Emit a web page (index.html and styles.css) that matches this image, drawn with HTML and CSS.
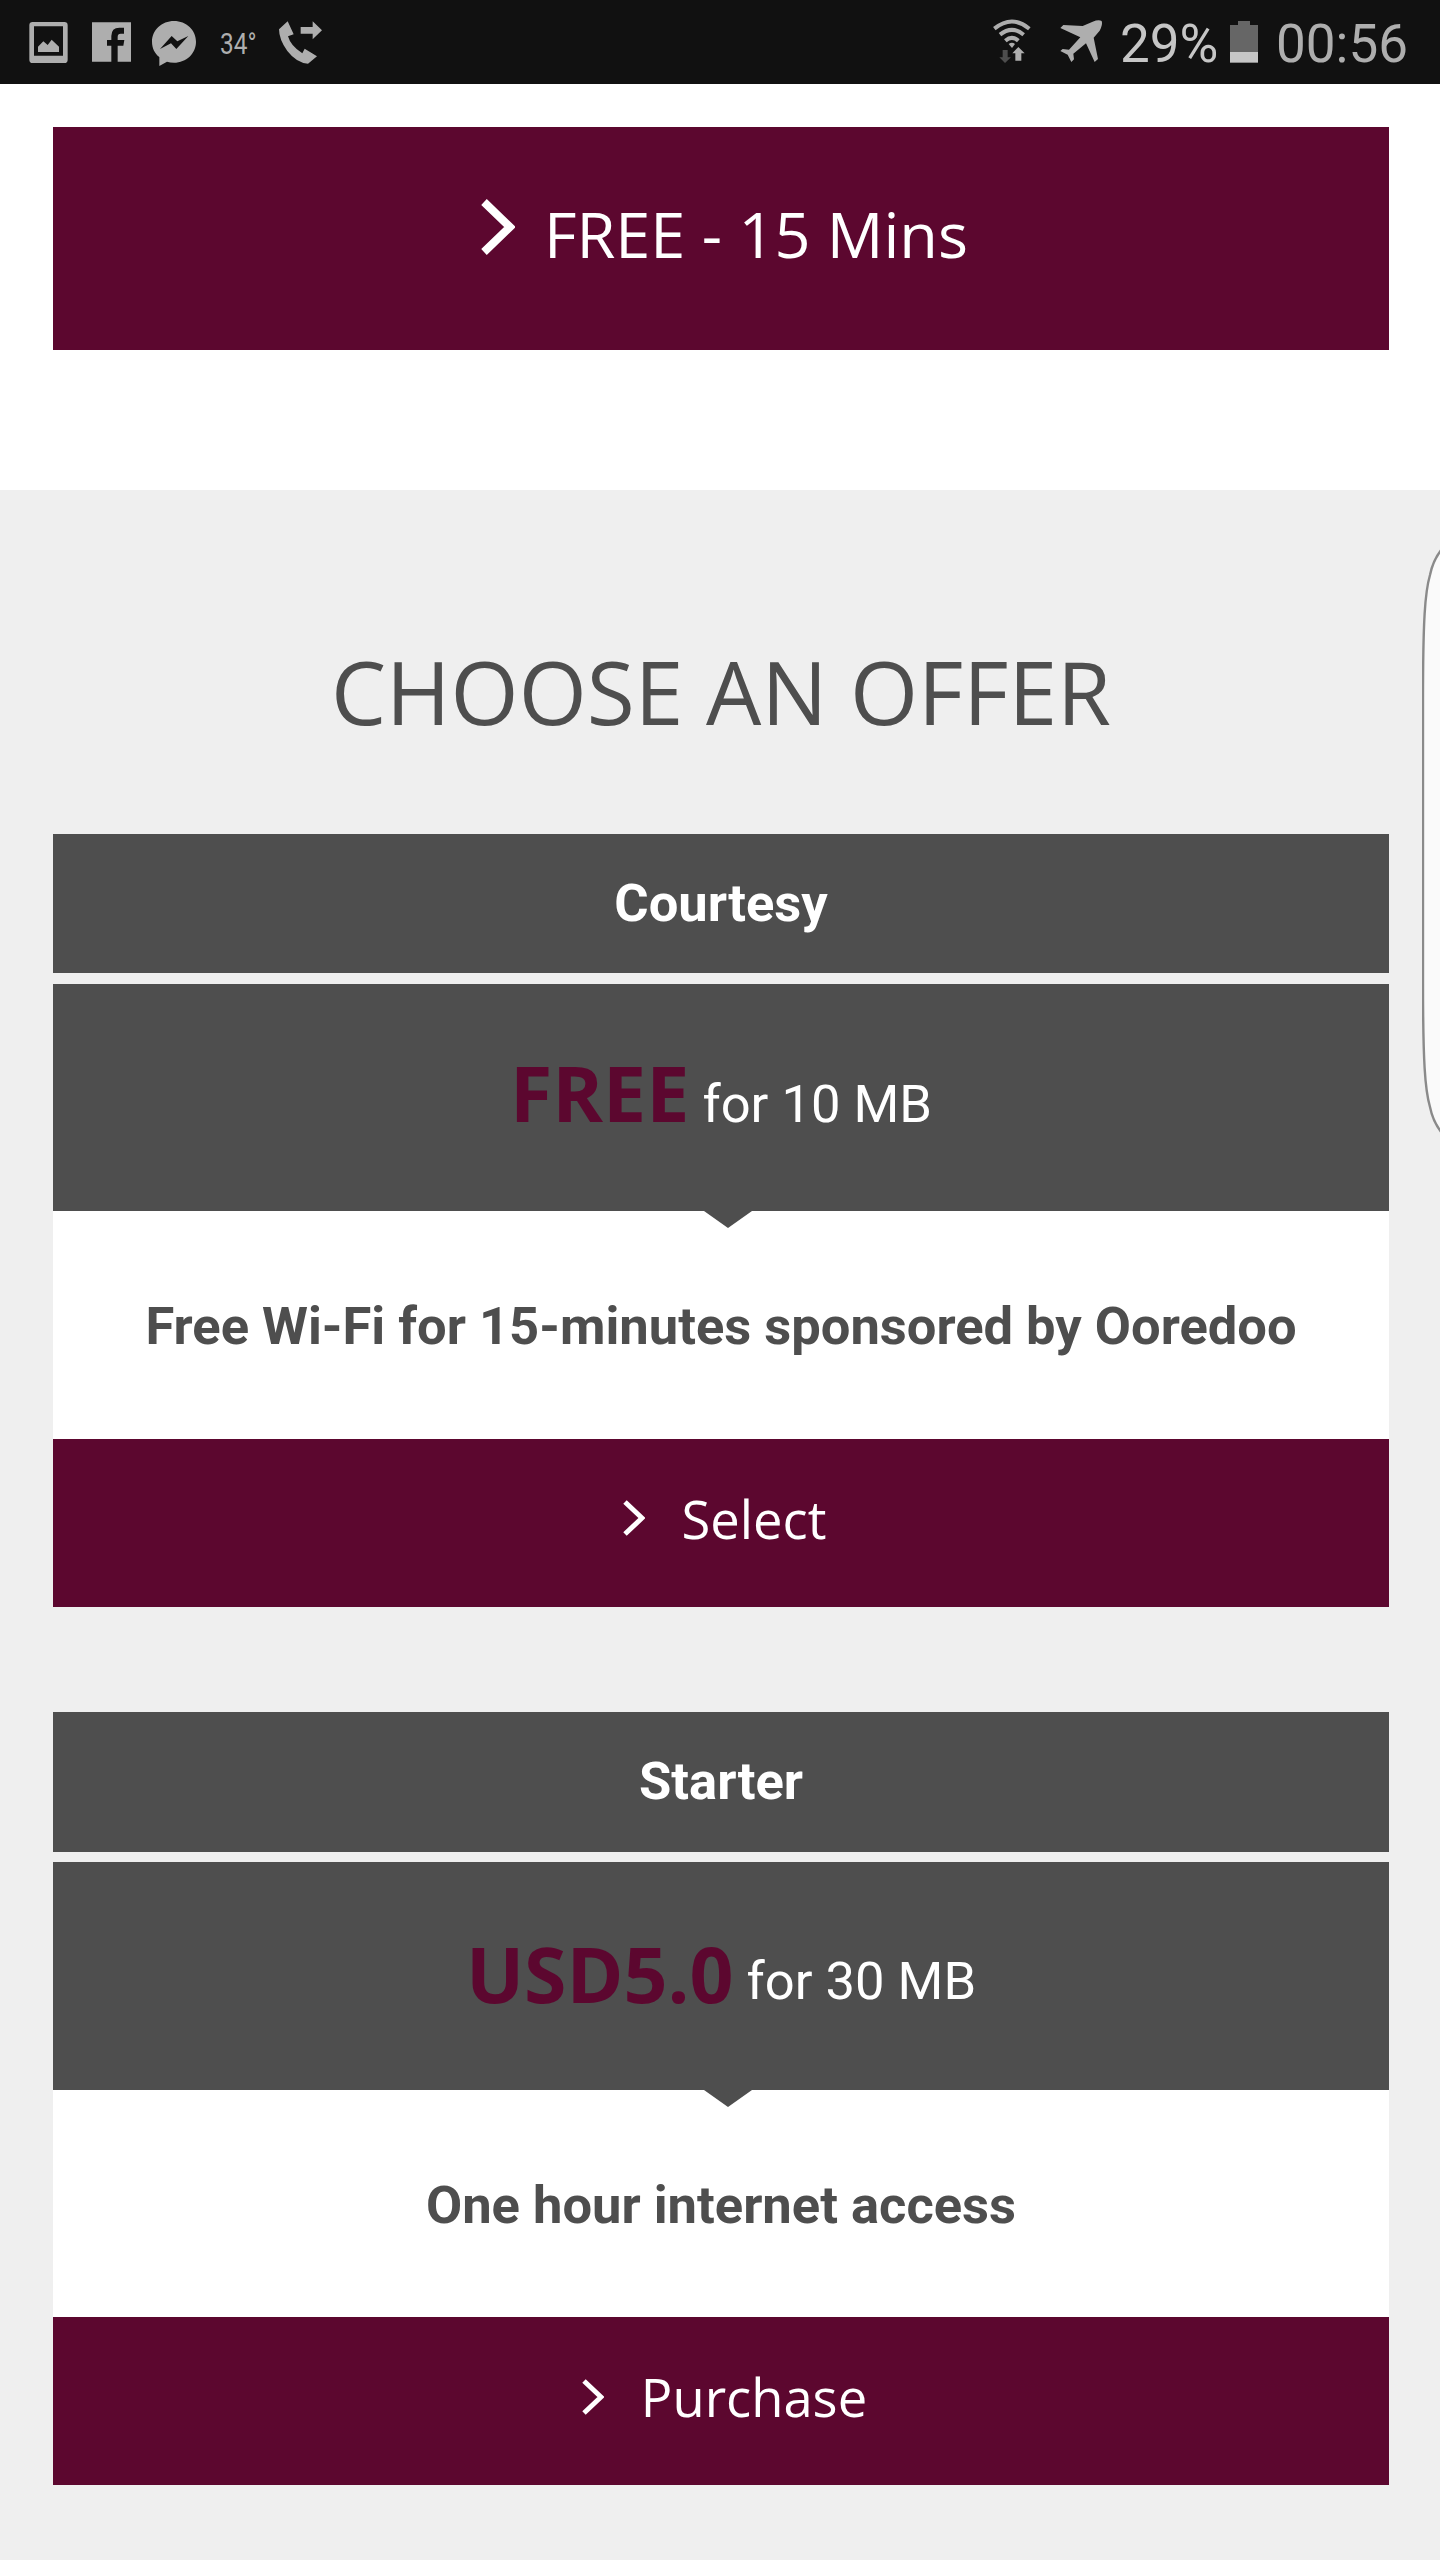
FILE: index.html
```html
<!DOCTYPE html>
<html lang="en">

<head>
  <meta charset="utf-8">
  <title>Wi-Fi Offers</title>
  <link rel="stylesheet" href="styles.css">
</head>

<body>
  <div class="status-bar">
    <svg class="icon-photo" width="39" height="84" viewBox="87 0 117 252">
      <path fill="#aeaeae" fill-rule="evenodd" d="M98 66h95q10 0 10 10v103q0 10-10 10H98q-10 0-10-10V76q0-10 10-10zM102 79v88h87V79z" />
      <path fill="#aeaeae" d="M114 156v-16l16-16 13 11 12-16 22 21v16z" />
    </svg>
    <svg class="icon-facebook" width="39" height="84" viewBox="276 0 117 252">
      <path fill="#aeaeae" d="M276 67h117v118h-40v-48h17l3-17h-20v-10q0-9 9-9h10V83h-14q-24 0-24 25v12h-13v17h13v48h-58z" />
    </svg>
    <svg class="icon-messenger" width="44" height="84" viewBox="456 0 132 252">
      <path fill="#aeaeae" d="M522 63c37 0 66 27 66 62s-29 63-66 63c-8 0-15-1-21-3l-23 13v-27c-14-11-22-27-22-46 0-35 29-62 66-62z" />
      <path fill="#111" d="M480 147l35-39 17 16 33-16-36 39-16-17z" />
    </svg>
    <span class="temperature">34°</span>
    <svg class="icon-call" width="43" height="84" viewBox="837 0 129 252">
      <path fill="#aeaeae" d="M837 88l26-24 18 39-17 6q8 29 43 51l7-14 37 23-27 22q-34-2-62-38-25-34-25-65z" />
      <path fill="#aeaeae" d="M902 81h36V64l28 27-28 27v-17h-36z" />
    </svg>

    <svg class="icon-wifi" width="38" height="84" viewBox="98 0 114 252">
      <g fill="none" stroke="#aeaeae" stroke-width="12">
        <path d="M102 86q53-43 105 0" />
        <path d="M119 104q36-29 71 0" />
        <path d="M135 122q20-17 39 0" />
      </g>
      <path fill="#aeaeae" d="M145 132q10-8 19 0l-9 12z" />
      <path fill="#4d4d4d" d="M127 150h15v22h10l-18 17-17-17h10z" />
      <path fill="#aeaeae" d="M174 141l19 19h-10v22h-18v-22h-9z" />
    </svg>
    <svg class="icon-plane" width="43" height="84" viewBox="300 0 129 252">
      <path fill="#aeaeae" d="M301 84l9-9 58 3 30-13q18-7 27-2 4 10-6 29l-18 21 13 64-10 9-26-56-38 31 2 17-8 8-11-22-22-11 7-6 19 2 34-37z" />
    </svg>
    <span class="battery-level">29%</span>
    <svg class="icon-battery" width="28" height="84" viewBox="810 0 84 252">
      <path fill="#666" d="M810 75h24V63h36v12h24v81h-84z" />
      <path fill="#c6c6c6" d="M810 156h84v32h-84z" />
    </svg>
    <span class="clock">00:56</span>
  </div>

  <div class="free-access">
    <a class="free-btn">
      <svg class="free-arrow" width="34" height="56" viewBox="0 0 34 56">
        <path d="M3 3l26 25L3 53" />
      </svg>
      <span>FREE - 15 Mins</span>
    </a>
  </div>

  <div class="offers">
    <h1 class="offers-title">CHOOSE AN OFFER</h1>

    <div class="offer">
      <div class="offer-name">Courtesy</div>
      <div class="offer-price"><strong>FREE</strong> <span>for 10 MB</span></div>
      <div class="offer-description">Free Wi-Fi for 15-minutes sponsored by Ooredoo</div>
      <a class="offer-btn">
        <svg class="offer-arrow" width="22" height="36" viewBox="0 0 22 36">
          <path d="M2 2l17 16L2 34" />
        </svg>
        <span>Select</span>
      </a>
    </div>

    <div class="offer">
      <div class="offer-name">Starter</div>
      <div class="offer-price paid"><strong>USD5.0</strong> <span>for 30 MB</span></div>
      <div class="offer-description">One hour internet access</div>
      <a class="offer-btn">
        <svg class="offer-arrow" width="22" height="36" viewBox="0 0 22 36">
          <path d="M2 2l17 16L2 34" />
        </svg>
        <span>Purchase</span>
      </a>
    </div>
  </div>

  <svg class="edge-handle" width="18" height="622" viewBox="0 0 18 622">
    <path d="M20 19Q11 30 8 45C3 62 1 90 1 170V452C1 532 3 560 8 577Q11 592 20 603" />
  </svg>
</body>

</html>
```

FILE: styles.css
```css
* {
  box-sizing: border-box;
}

body {
  margin: 0;
  height: 2560px;
  overflow: hidden;
  position: relative;
  background-color: #efefef;
  font-family: Roboto, sans-serif;
  font-size: 52.5px;
}

svg {
  display: block;
  flex: none;
}

/* status bar */
.status-bar {
  display: flex;
  height: 84px;
  padding-left: 29px;
  background-color: #111;
  color: #aeaeae;
  line-height: 88px;
  white-space: nowrap;
}

.icon-facebook {
  margin-left: 24px;
}

.icon-messenger {
  margin-left: 21px;
}

.temperature {
  width: 59px;
  margin-left: 24px;
  font-size: 29px;
  transform: scaleX(0.84);
  transform-origin: left;
}

.icon-wifi {
  margin-left: auto;
}

.icon-plane {
  margin-left: 29px;
}

.battery-level {
  width: 110px;
  margin-left: 17px;
  color: #c6c6c6;
  font-size: 53px;
}

.clock {
  width: 164px;
  margin-left: 18px;
  font-size: 53px;
}

/* free access button */
.free-access {
  height: 406px;
  padding: 43px 51px 0 53px;
  background-color: #fff;
}

.free-btn {
  display: flex;
  justify-content: center;
  align-items: center;
  height: 223px;
  padding: 0 0 10px 7px;
  background-color: #5c072f;
  color: #fff;
  font-family: "Open Sans", sans-serif;
  font-size: 63px;
}

.free-arrow {
  margin: 0 29px 13px 0;
}

.free-arrow path {
  fill: none;
  stroke: #fff;
  stroke-width: 8;
}

/* offers */
.offers {
  padding: 141px 51px 0 53px;
}

.offers-title {
  margin: 0 0 82.65px;
  color: #4e4e4e;
  font-family: "Open Sans", sans-serif;
  font-size: 87.5px;
  font-weight: 400;
  line-height: 120px;
  text-align: center;
}

.offer {
  margin-bottom: 105.7px;
  text-align: center;
}

.offer-name {
  height: 139.8px;
  margin-bottom: 10.2px;
  background-color: #4e4e4e;
  color: #fff;
  font-weight: 700;
  line-height: 138px;
}

.offer-price {
  position: relative;
  height: 227.5px;
  padding-top: 70px;
  background-color: #4e4e4e;
  color: #fff;
  line-height: 100px;
}

.offer-price strong {
  color: #5c072f;
  font-family: "Open Sans", sans-serif;
  font-size: 77px;
  font-weight: 700;
  line-height: 77px;
}

.offer-price.paid {
  padding-top: 73px;
}

.offer-price.paid span {
  line-height: 50px;
  vertical-align: 4px;
}

.offer-price::after {
  content: "";
  position: absolute;
  top: 100%;
  left: 651px;
  border: 24px solid transparent;
  border-top: 17px solid #4e4e4e;
  border-bottom: 0;
}

.offer-description {
  height: 227.5px;
  padding-top: 2px;
  background-color: #fff;
  color: #4e4e4e;
  font-weight: 700;
  line-height: 227.5px;
}

.offer-btn {
  display: flex;
  justify-content: center;
  align-items: center;
  height: 168px;
  padding: 0 0 9px 7px;
  background-color: #5c072f;
  color: #fff;
  font-family: "Open Sans", sans-serif;
}

.offer-arrow {
  margin-right: 37px;
}

.offer-arrow path {
  fill: none;
  stroke: #fff;
  stroke-width: 5;
}

/* edge panel handle on the right side of the screen */
.edge-handle {
  position: absolute;
  top: 530px;
  right: 0;
}

.edge-handle path {
  fill: #fafafa;
  stroke: #8a8a8a;
  stroke-width: 2.4;
}
```
